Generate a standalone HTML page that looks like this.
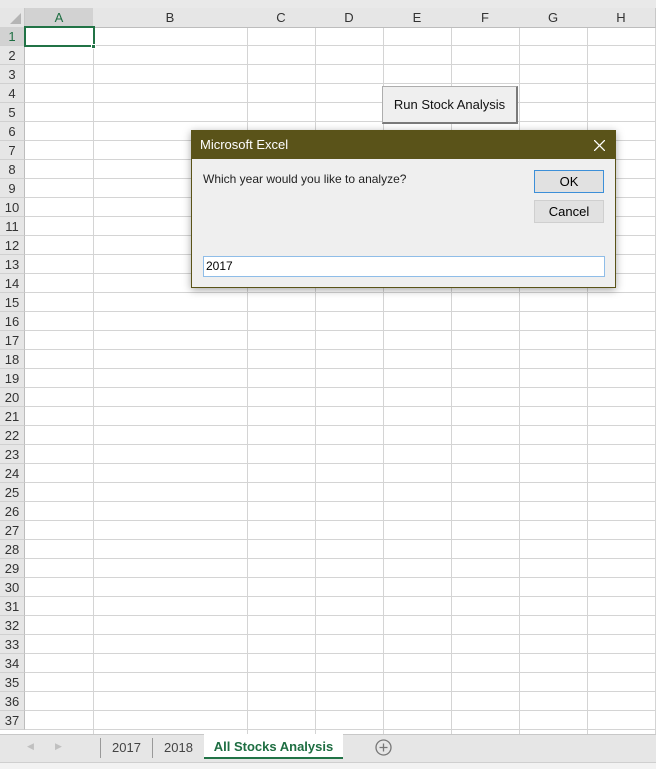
<!DOCTYPE html><html><head><style>
*{margin:0;padding:0;box-sizing:border-box}
body{width:656px;height:769px;overflow:hidden;background:#fff;font-family:"Liberation Sans",sans-serif;position:relative}
.a{position:absolute}
.ch{top:8px;height:20px;background:#e6e6e6;border-right:1px solid #c8c8c8;border-bottom:1px solid #bdbdbd;font-size:13px;color:#333;text-align:center;line-height:19px}
.rh{left:0;width:25px;height:19px;background:#e6e6e6;border-bottom:1px solid #d0d0d0;border-right:1px solid #bdbdbd;font-size:13px;color:#333;text-align:center;line-height:19px}
</style></head><body>
<div class="a" style="left:0;top:0;width:656px;height:8px;background:#e9e9e9"></div>
<div class="a" style="left:25px;top:27px;width:631px;height:707px;background-image:repeating-linear-gradient(to bottom,transparent 0 18px,#d4d4d4 18px 19px)"></div>
<div class="a ch" style="left:0;width:25px;"><div class="a" style="right:3px;bottom:3px;width:0;height:0;border-left:11px solid transparent;border-bottom:11px solid #b5b5b5"></div></div>
<div id="hdr"></div>
<script>
var xs=[25,93,247,315,383,451,519,587,655],L="ABCDEFGH",h="";
for(var i=0;i<8;i++){h+='<div class="a ch" style="left:'+xs[i]+'px;width:'+(xs[i+1]-xs[i]+1)+'px;'+(i==0?'background:#d2d2d2;color:#1e6e42;border-bottom:2px solid #217346':'')+'">'+L[i]+'</div>';
h+='<div class="a" style="left:'+(xs[i+1])+'px;top:28px;width:1px;height:706px;background:#d4d4d4"></div>';}
for(var r=1;r<=37;r++){h+='<div class="a rh" style="top:'+(27+(r-1)*19)+'px;'+(r==1?'background:#d2d2d2;color:#1e6e42':'')+'">'+r+'</div>';}
document.getElementById('hdr').innerHTML=h;
</script>
<div class="a" style="left:24px;top:26px;width:71px;height:21px;border:2px solid #217346"></div>
<div class="a" style="left:91px;top:44px;width:5px;height:5px;background:#217346;border:1px solid #fff"></div>
<div class="a" style="left:382px;top:86px;width:136px;height:38px;background:#efefef;border:1px solid #adadad;border-right:2px solid #7a7a7a;border-bottom:2px solid #7a7a7a;font-size:13px;line-height:36px;text-align:center;color:#111">Run Stock Analysis</div>
<div class="a" style="left:191px;top:130px;width:425px;height:158px;background:#efefef;border:1px solid #5a5318;box-shadow:0 2px 8px rgba(0,0,0,.35)">
<div class="a" style="left:0;top:0;width:423px;height:28px;background:#5a5319;color:#fff;font-size:13px;line-height:28px;padding-left:8px">Microsoft Excel
<svg class="a" style="right:10px;top:9px" width="11" height="11"><path d="M0 0L11 11M11 0L0 11" stroke="#fff" stroke-width="1.3"/></svg></div>
<div class="a" style="left:11px;top:41px;font-size:12px;color:#222">Which year would you like to analyze?</div>
<div class="a" style="left:342px;top:39px;width:70px;height:23px;background:#e1e1e1;border:1px solid #3c8fd8;font-size:13px;text-align:center;line-height:21px">OK</div>
<div class="a" style="left:342px;top:69px;width:70px;height:23px;background:#e1e1e1;border:1px solid #cfcfcf;font-size:13px;text-align:center;line-height:21px">Cancel</div>
<div class="a" style="left:11px;top:125px;width:402px;height:21px;background:#fff;border:1px solid #8fbde8;font-size:12px;line-height:19px;padding-left:2px">2017</div>
</div>
<div class="a" style="left:0;top:734px;width:656px;height:28px;background:#e6e6e6;border-top:1px solid #c8c8c8"></div>
<div class="a" style="left:0;top:762px;width:656px;height:7px;background:#f2f2f2;border-top:1px solid #cfcfcf"></div>
<div class="a" style="left:27px;top:741px;font-size:9px;color:#c0c0c0">◀</div>
<div class="a" style="left:55px;top:741px;font-size:9px;color:#c0c0c0">▶</div>
<div class="a" style="left:100px;top:738px;width:1px;height:20px;background:#999"></div>
<div class="a" style="left:112px;top:740px;font-size:13px;color:#444">2017</div>
<div class="a" style="left:152px;top:738px;width:1px;height:20px;background:#999"></div>
<div class="a" style="left:164px;top:740px;font-size:13px;color:#444">2018</div>
<div class="a" style="left:204px;top:734px;width:139px;height:25px;background:#fff;border-bottom:2px solid #217346;font-size:13px;font-weight:bold;color:#1e6e42;text-align:center;line-height:25px">All Stocks Analysis</div>
<svg class="a" style="left:375px;top:739px" width="17" height="17"><circle cx="8.5" cy="8.5" r="7.5" fill="none" stroke="#777" stroke-width="1.3"/><path d="M8.5 4.5V12.5M4.5 8.5H12.5" stroke="#777" stroke-width="1.3"/></svg>
</body></html>
